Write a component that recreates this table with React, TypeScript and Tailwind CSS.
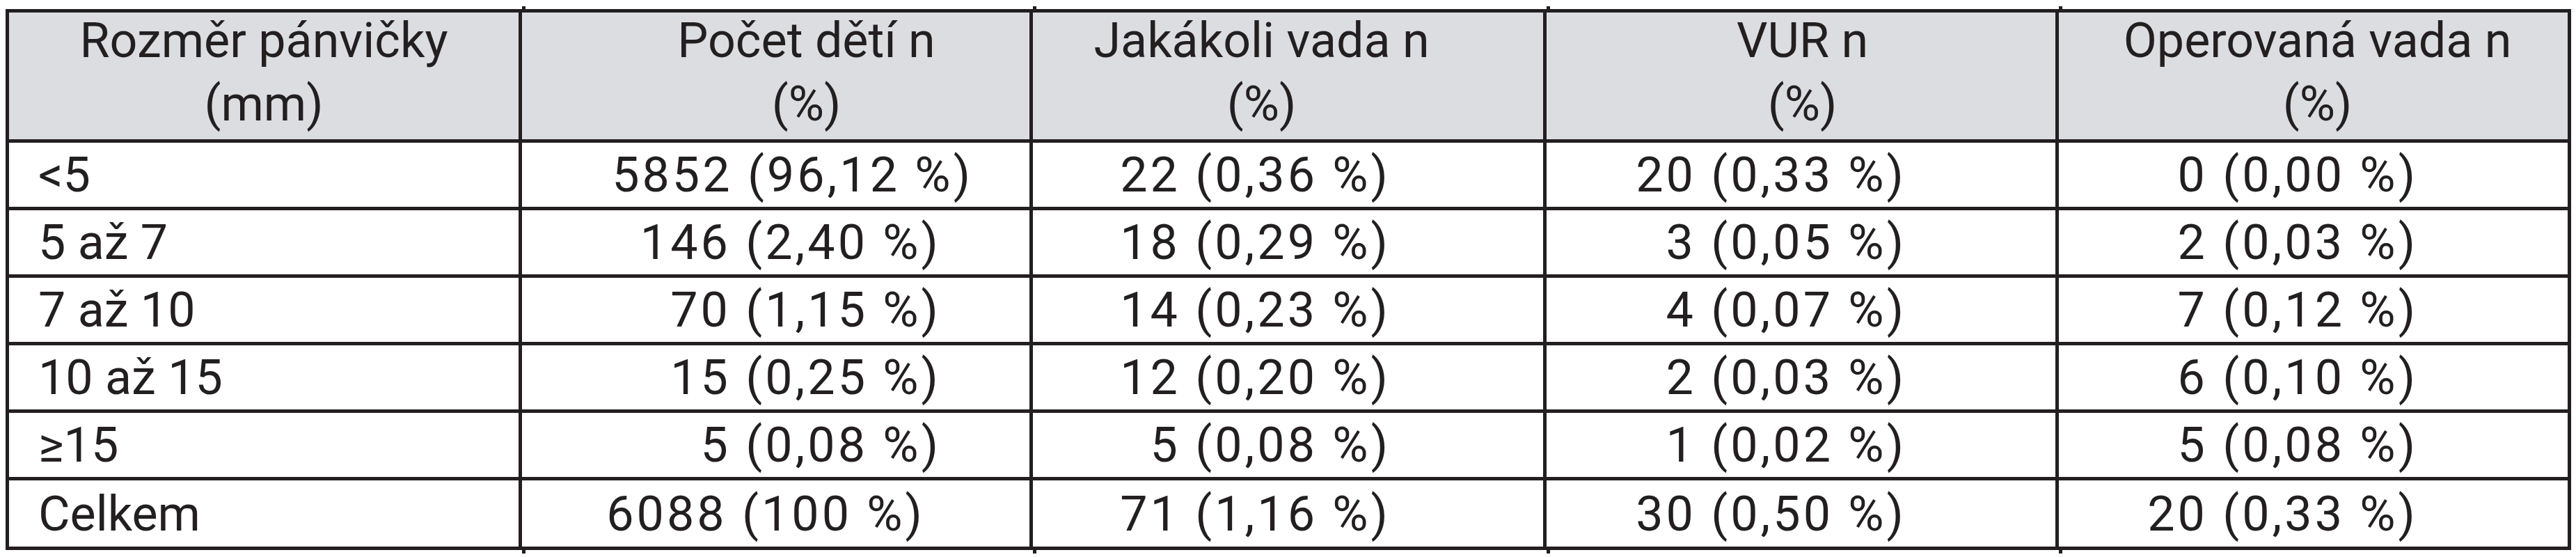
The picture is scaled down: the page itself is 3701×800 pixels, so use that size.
import React from 'react';

type Row = {
  size: string;
  count: string;
  countPad: string;
  any: string;
  vur: string;
  operated: string;
  last?: boolean;
};

const headers = [
  { top: 'Rozměr pánvičky', bottom: '(mm)', pad: '' },
  { top: 'Počet dětí n', bottom: '(%)', pad: 'pl-[88px]' },
  { top: 'Jakákoli vada n', bottom: '(%)', pad: 'pr-[76px]' },
  { top: 'VUR n', bottom: '(%)', pad: 'pl-[4px]' },
  { top: 'Operovaná vada n', bottom: '(%)', pad: 'pl-[12px]' },
];

const rows: Row[] = [
  { size: '<5', count: '5852 (96,12 %)', countPad: 'pr-[81px]', any: '22 (0,36 %)', vur: '20 (0,33 %)', operated: '0 (0,00 %)' },
  { size: '5 až 7', count: '146 (2,40 %)', countPad: 'pr-[127px]', any: '18 (0,29 %)', vur: '3 (0,05 %)', operated: '2 (0,03 %)' },
  { size: '7 až 10', count: '70 (1,15 %)', countPad: 'pr-[127px]', any: '14 (0,23 %)', vur: '4 (0,07 %)', operated: '7 (0,12 %)' },
  { size: '10 až 15', count: '15 (0,25 %)', countPad: 'pr-[127px]', any: '12 (0,20 %)', vur: '2 (0,03 %)', operated: '6 (0,10 %)' },
  { size: '≥15', count: '5 (0,08 %)', countPad: 'pr-[127px]', any: '5 (0,08 %)', vur: '1 (0,02 %)', operated: '5 (0,08 %)' },
  { size: 'Celkem', count: '6088 (100 %)', countPad: 'pr-[150px]', any: '71 (1,16 %)', vur: '30 (0,50 %)', operated: '20 (0,33 %)', last: true },
];

// divider ticks poking out above/below the frame (x relative to table edge)
const ticks = ['left-[737px]', 'left-[1471px]', 'left-[2209px]', 'left-[2945px]'];

const cols = 'grid grid-cols-[732px_734px_738px_736px_736px]';

const App: React.FC = () => {
  return (
    <div className="min-h-[800px] bg-white pt-[13px] pl-[8px] font-['Roboto',sans-serif] text-[70px] text-[#231f20]">
      <div className="relative w-[3686px] border-[5px] border-[#231f20]">
        {ticks.map(t => (
          <React.Fragment key={t}>
            <span className={`absolute -top-[9px] h-[4px] w-[5px] bg-[#231f20] ${t}`} />
            <span className={`absolute -bottom-[10px] h-[5px] w-[5px] bg-[#231f20] ${t}`} />
          </React.Fragment>
        ))}

        {/* header */}
        <div className={`${cols} bg-[#dcdde0]`}>
          {headers.map((h, i) => (
            <div
              key={h.top}
              className={`h-[182px] text-center ${i > 0 ? 'border-l-[5px] border-[#231f20]' : ''} ${h.pad}`}
            >
              <div className="-mt-[5px] leading-[91px]">
                <div>{h.top}</div>
                <div>{h.bottom}</div>
              </div>
            </div>
          ))}
        </div>

        {/* data rows */}
        {rows.map(r => (
          <div
            key={r.size}
            className={`${cols} border-t-[5px] border-[#231f20] leading-none ${r.last ? 'h-[100px]' : 'h-[97px]'}`}
          >
            <div className="flex items-center pl-[42px]">{r.size}</div>
            <div className={`flex items-center justify-end border-l-[5px] border-[#231f20] tracking-[4px] ${r.countPad}`}>
              {r.count}
            </div>
            <div className="flex items-center justify-end border-l-[5px] border-[#231f20] pr-[219px] tracking-[4px]">
              {r.any}
            </div>
            <div className="flex items-center justify-end border-l-[5px] border-[#231f20] pr-[214px] tracking-[4px]">
              {r.vur}
            </div>
            <div className="flex items-center justify-end border-l-[5px] border-[#231f20] pr-[215px] tracking-[4px]">
              {r.operated}
            </div>
          </div>
        ))}
      </div>
    </div>
  );
};

export default App;
